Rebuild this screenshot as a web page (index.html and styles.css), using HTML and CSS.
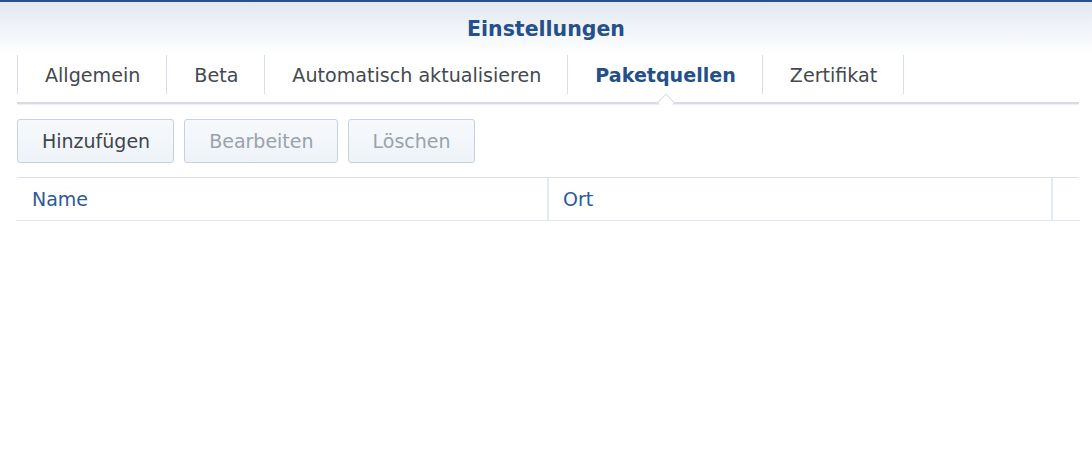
FILE: index.html
```html
<!DOCTYPE html>
<html lang="de">
<head>
<meta charset="utf-8">
<title>Einstellungen</title>
<link rel="stylesheet" href="styles.css">
</head>
<body>
<div class="window">
  <header class="header">
    <h1 class="title">Einstellungen</h1>
  </header>
  <div class="content">
    <nav class="tabs">
      <div class="tab">Allgemein</div>
      <div class="tab">Beta</div>
      <div class="tab">Automatisch aktualisieren</div>
      <div class="tab active">Paketquellen</div>
      <div class="tab">Zertifikat</div>
    </nav>
    <div class="toolbar">
      <button class="btn">Hinzufügen</button>
      <button class="btn disabled">Bearbeiten</button>
      <button class="btn disabled">Löschen</button>
    </div>
    <div class="grid-head">
      <div class="col col-name">Name</div>
      <div class="col col-ort">Ort</div>
      <div class="col col-rest"></div>
    </div>
  </div>
</div>
</body>
</html>
```
FILE: styles.css
```css
* { box-sizing: border-box; }
html, body { margin: 0; padding: 0; background: #fff; }
body {
  font-family: "DejaVu Sans", Verdana, sans-serif;
  width: 1092px;
  height: 458px;
  overflow: hidden;
}
.window {
  border-top: 2px solid #24508b;
}
.header {
  height: 53px;
  background: linear-gradient(to bottom, #e2e8f0 0%, #f2f5f9 55%, #ffffff 100%);
  display: flex;
  justify-content: center;
  padding-top: 16px;
}
.title {
  margin: 0;
  font-size: 20.5px;
  font-weight: bold;
  color: #255089;
  line-height: 22px;
}
.content {
  padding: 0 13px 0 17px;
}
.tabs {
  display: flex;
  height: 49px;
  border-bottom: 2px solid #d9dde2;
  box-shadow: 0 1px 0 #eef0f3;
  position: relative;
}
.tab {
  height: 39px;
  padding: 1px 26px 0 27px;
  border-left: 1px solid #d5dfe9;
  font-size: 19.1px;
  line-height: 40px;
  color: #43494f;
  position: relative;
  white-space: nowrap;
}
.tab:last-child { border-right: 1px solid #d5dfe9; }
.tab.active {
  font-weight: bold;
  color: #245089;
}
.tab.active::after {
  content: "";
  position: absolute;
  left: 50%;
  bottom: -14px;
  width: 11px;
  height: 11px;
  margin-left: -5px;
  background: #fff;
  border-left: 1px solid #d9dde2;
  border-top: 1px solid #d9dde2;
  transform: rotate(45deg);
}
.toolbar {
  display: flex;
  gap: 10px;
  padding-top: 15px;
  height: 73px;
}
.btn {
  height: 44px;
  padding: 0 23px 0 24px;
  font-family: "DejaVu Sans", Verdana, sans-serif;
  font-size: 19px;
  color: #3f454b;
  background: linear-gradient(to bottom, #f7f9fc, #eef3f8);
  border: 1px solid #c6d2de;
  border-radius: 3px;
  white-space: nowrap;
}
.btn.disabled { color: #9aa2ab; }
.grid-head {
  display: flex;
  height: 44px;
  border-top: 1px solid #d8e2ed;
  border-bottom: 1px solid #dfe7f0;
  width: 1062px;
}
.col {
  font-size: 19px;
  line-height: 42px;
  color: #2b5a97;
  padding-left: 14px;
}
.col-name { width: 532px; border-right: 2px solid #e2eaf3; padding-left: 15px; }
.col-ort { width: 504px; border-right: 2px solid #e2eaf3; }
.col-rest { flex: 1; }
```
